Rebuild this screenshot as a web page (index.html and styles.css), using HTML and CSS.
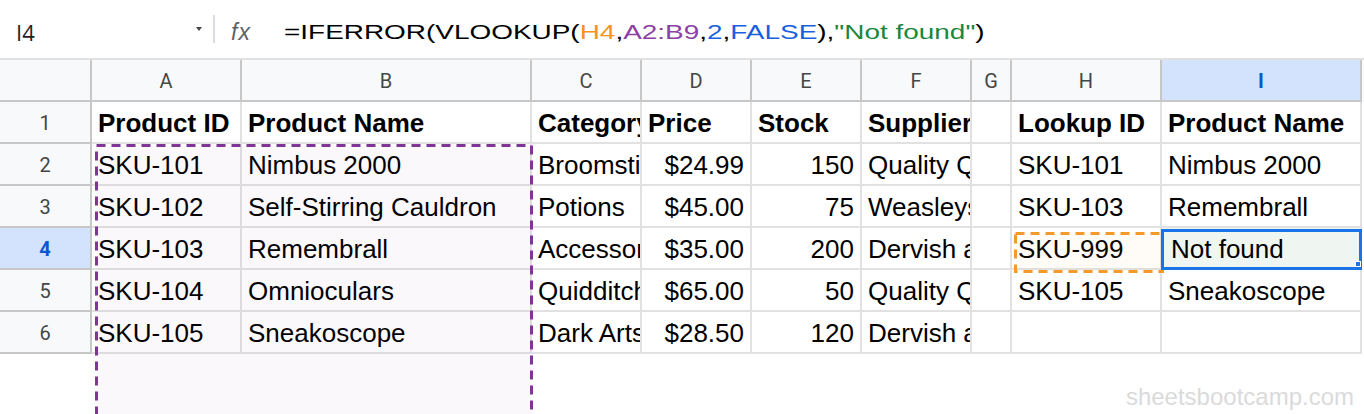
FILE: index.html
```html
<!DOCTYPE html>
<html>
<head>
<meta charset="utf-8">
<link rel="stylesheet" href="styles.css">
</head>
<body>
<div class="page">
  <div class="formula-bar">
    <div class="namebox"><span class="ref">I4</span></div>
    <span class="caret"></span>
    <span class="sep"></span>
    <div class="fx">fx</div>
    <div class="formula"><span class="formula-text">=IFERROR(VLOOKUP(<span class="c-orange">H4</span>,<span class="c-purple">A2:B9</span>,<span class="c-blue">2</span>,<span class="c-blue">FALSE</span>),<span class="c-green">"Not found"</span>)</span></div>
  </div>

  <div class="grid">
    <div class="row head-row">
      <div class="corner"></div>
      <div class="colhead">A</div>
      <div class="colhead">B</div>
      <div class="colhead">C</div>
      <div class="colhead">D</div>
      <div class="colhead">E</div>
      <div class="colhead">F</div>
      <div class="colhead">G</div>
      <div class="colhead">H</div>
      <div class="colhead sel">I</div>
    </div>
    <div class="row">
      <div class="rowhead">1</div>
      <div class="cell bold">Product ID</div>
      <div class="cell bold">Product Name</div>
      <div class="cell bold">Category</div>
      <div class="cell bold">Price</div>
      <div class="cell bold">Stock</div>
      <div class="cell bold">Supplier</div>
      <div class="cell"></div>
      <div class="cell bold">Lookup ID</div>
      <div class="cell bold">Product Name</div>
    </div>
    <div class="row">
      <div class="rowhead">2</div>
      <div class="cell">SKU-101</div>
      <div class="cell">Nimbus 2000</div>
      <div class="cell">Broomsticks</div>
      <div class="cell num">$24.99</div>
      <div class="cell num">150</div>
      <div class="cell">Quality Quidditch Supplies</div>
      <div class="cell"></div>
      <div class="cell">SKU-101</div>
      <div class="cell">Nimbus 2000</div>
    </div>
    <div class="row">
      <div class="rowhead">3</div>
      <div class="cell">SKU-102</div>
      <div class="cell">Self-Stirring Cauldron</div>
      <div class="cell">Potions</div>
      <div class="cell num">$45.00</div>
      <div class="cell num">75</div>
      <div class="cell">Weasleys' Wizard Wheezes</div>
      <div class="cell"></div>
      <div class="cell">SKU-103</div>
      <div class="cell">Remembrall</div>
    </div>
    <div class="row">
      <div class="rowhead sel">4</div>
      <div class="cell">SKU-103</div>
      <div class="cell">Remembrall</div>
      <div class="cell">Accessories</div>
      <div class="cell num">$35.00</div>
      <div class="cell num">200</div>
      <div class="cell">Dervish and Banges</div>
      <div class="cell"></div>
      <div class="cell">SKU-999</div>
      <div class="cell active">Not found</div>
    </div>
    <div class="row">
      <div class="rowhead">5</div>
      <div class="cell">SKU-104</div>
      <div class="cell">Omnioculars</div>
      <div class="cell">Quidditch</div>
      <div class="cell num">$65.00</div>
      <div class="cell num">50</div>
      <div class="cell">Quality Quidditch Supplies</div>
      <div class="cell"></div>
      <div class="cell">SKU-105</div>
      <div class="cell">Sneakoscope</div>
    </div>
    <div class="row">
      <div class="rowhead">6</div>
      <div class="cell">SKU-105</div>
      <div class="cell">Sneakoscope</div>
      <div class="cell">Dark Arts</div>
      <div class="cell num">$28.50</div>
      <div class="cell num">120</div>
      <div class="cell">Dervish and Banges</div>
      <div class="cell"></div>
      <div class="cell"></div>
      <div class="cell"></div>
    </div>
  </div>

  <svg class="overlay" width="1364" height="414" viewBox="0 0 1364 414">
    <rect x="96.5" y="145.5" width="435" height="300" fill="rgba(126,55,148,0.035)" stroke="#7e3794" stroke-width="3" stroke-dasharray="9 6"/>
    <rect x="1015.5" y="233.5" width="147" height="38" fill="rgba(243,154,43,0.04)" stroke="#f39a2b" stroke-width="3" stroke-dasharray="9 6"/>
    <rect x="1162.5" y="230.5" width="198" height="38" fill="none" stroke="#1a73e8" stroke-width="3"/>
    <rect x="1355.5" y="261.5" width="5" height="5" fill="#1a73e8" stroke="#ffffff" stroke-width="1"/>
  </svg>

  <div class="watermark">sheetsbootcamp.com</div>
</div>
</body>
</html>
```

FILE: styles.css
```css
html, body {
  margin: 0;
  padding: 0;
  background: #ffffff;
}

.page {
  position: relative;
  width: 1364px;
  height: 414px;
  overflow: hidden;
  font-family: "Liberation Sans", Arial, sans-serif;
  color: #000000;
}

/* ---------- formula bar ---------- */
.formula-bar {
  display: flex;
  align-items: center;
  height: 60px;
  box-sizing: border-box;
  padding-top: 6px;
  border-bottom: 2px solid #e1e1e1;
}

.namebox {
  width: 196px;
  box-sizing: border-box;
  padding-left: 16px;
  font-family: "Open Sans", Roboto, sans-serif;
  font-size: 22px;
  color: #1f1f1f;
}

.caret {
  width: 0;
  height: 0;
  border-left: 3px solid transparent;
  border-right: 3px solid transparent;
  border-top: 4px solid #444746;
  margin-bottom: 6px;
}

.sep {
  width: 2px;
  height: 28px;
  margin-left: 11px;
  margin-bottom: 6px;
  background: #dadce0;
}

.fx {
  width: 53px;
  margin-left: 16px;
  font-family: "Liberation Sans", Arial, sans-serif;
  font-style: italic;
  font-size: 23px;
  color: #5f6368;
  letter-spacing: 1px;
}

.formula {
  flex: 1;
  font-size: 21px;
  white-space: nowrap;
}

.formula-text {
  display: inline-block;
  transform: scaleX(1.33);
  transform-origin: left center;
}

.c-orange { color: #f7931e; }
.c-purple { color: #8e40a5; }
.c-blue { color: #1a5fe0; }
.c-green { color: #1b873b; }

/* ---------- grid ---------- */
.grid {
  width: 1364px;
}

.row {
  display: grid;
  grid-template-columns: 92px 150px 290px 110px 110px 110px 110px 40px 150px 200px;
  height: 42px;
}

.head-row {
  background: #f8f9fa;
}

.corner,
.colhead,
.rowhead {
  box-sizing: border-box;
  background: #f8f9fa;
  border-right: 2px solid #c7c7c7;
  border-bottom: 2px solid #c7c7c7;
  display: flex;
  align-items: center;
  justify-content: center;
  font-family: Roboto, "Liberation Sans", sans-serif;
  font-size: 20px;
  color: #444746;
  padding-top: 1px;
}

.colhead.sel,
.rowhead.sel {
  background: #d3e3fd;
  color: #0b57d0;
  font-weight: bold;
}

.cell {
  box-sizing: border-box;
  border-right: 2px solid #e1e1e1;
  border-bottom: 2px solid #e1e1e1;
  display: flex;
  align-items: center;
  padding: 3px 6px 0 6px;
  overflow: hidden;
  white-space: nowrap;
  font-size: 26px;
}

.cell.bold {
  font-weight: bold;
}

.cell.num {
  justify-content: flex-end;
}

.cell.active {
  background: #eff5f1;
  padding-left: 9px;
}

/* ---------- overlays ---------- */
.overlay {
  position: absolute;
  top: 0;
  left: 0;
  pointer-events: none;
}

.watermark {
  position: absolute;
  right: 10px;
  top: 385px;
  font-size: 24px;
  line-height: 1;
  color: #dadada;
}
```
